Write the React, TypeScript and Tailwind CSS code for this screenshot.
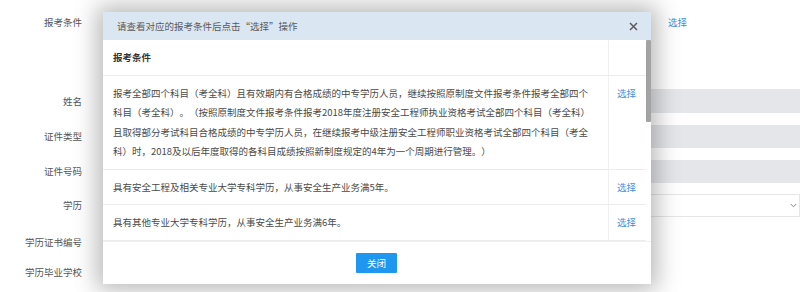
import React from "react";

const font = { fontFamily: '"Noto Sans CJK SC", "Noto Sans", sans-serif' };

export default function App() {
  return (
    <div
      className="relative w-[800px] h-[292px] bg-white overflow-hidden text-[9.5px] text-[#555] [text-spacing-trim:space-all]"
      style={font}
    >
      {/* background form */}
      <div className="flex flex-col">
        <div className="flex h-[44px] items-center">
          <div className="w-[82px] text-right">报考条件</div>
          <div className="flex-1" />
          <div className="w-[132px] text-[#3d8fe0]">选择</div>
        </div>
        <div className="flex h-[24px] items-center mt-[45px]">
          <div className="w-[82px] text-right">姓名</div>
          <div className="ml-[28px] flex-1 h-[24px] bg-[#e4e6e9]" />
        </div>
        <div className="flex h-[23px] items-center mt-[12px]">
          <div className="w-[82px] text-right">证件类型</div>
          <div className="ml-[28px] flex-1 h-[23px] bg-[#e4e6e9]" />
        </div>
        <div className="flex h-[23px] items-center mt-[12px]">
          <div className="w-[82px] text-right">证件号码</div>
          <div className="ml-[28px] flex-1 h-[23px] bg-[#e4e6e9]" />
        </div>
        <div className="flex h-[23px] items-center mt-[11px]">
          <div className="w-[82px] text-right">学历</div>
          <div className="ml-[28px] flex-1 h-[23px] border border-[#e6e6e6] bg-white flex items-center justify-end pr-[2px]">
            <svg width="7" height="5" viewBox="0 0 7 5">
              <path d="M0.8 1 L3.5 3.8 L6.2 1" stroke="#888" strokeWidth="1" fill="none" />
            </svg>
          </div>
        </div>
        <div className="flex h-[24px] items-center mt-[13px]">
          <div className="w-[82px] text-right">学历证书编号</div>
        </div>
        <div className="flex h-[24px] items-center mt-[6px]">
          <div className="w-[82px] text-right">学历毕业学校</div>
        </div>
      </div>

      {/* modal */}
      <div className="absolute left-[103px] top-[12px] w-[548px] h-[272px] bg-white shadow-[0_0_22px_6px_rgba(0,0,0,0.28)] flex flex-col">
        <div className="h-[28px] bg-[#dbe6f3] flex items-center justify-between pl-[14px] pr-[13px] text-[#5a5a5a]">
          <span>请查看对应的报考条件后点击“选择”操作</span>
          <svg width="9" height="9" viewBox="0 0 9 9">
            <path d="M1 1 L8 8 M8 1 L1 8" stroke="#5c5c5c" strokeWidth="1.5" />
          </svg>
        </div>
        <div className="flex h-[201px] overflow-hidden">
          <div className="flex-1 flex flex-col text-[#4a4a4a]">
            <div className="flex h-[36px] border-b border-[#ececec]">
              <div className="w-[505px] pl-[10px] flex items-center font-bold text-[#333]">报考条件</div>
              <div className="flex-1 border-l border-[#f0f0f0]" />
            </div>
            <div className="flex border-b border-[#ececec] h-[94px]">
              <div className="w-[505px] pl-[10px] pt-[8px] leading-[19.3px] whitespace-nowrap">
                <div>报考全部四个科目（考全科）且有效期内有合格成绩的中专学历人员，继续按照原制度文件报考条件报考全部四个</div>
                <div>科目（考全科）。（按照原制度文件报考条件报考2018年度注册安全工程师执业资格考试全部四个科目（考全科）</div>
                <div>且取得部分考试科目合格成绩的中专学历人员，在继续报考中级注册安全工程师职业资格考试全部四个科目（考全</div>
                <div>科）时，2018及以后年度取得的各科目成绩按照新制度规定的4年为一个周期进行管理。）</div>
              </div>
              <div className="flex-1 border-l border-[#f0f0f0] pt-[8px] leading-[19.3px] pl-[8px] text-[#3d8fe0]">选择</div>
            </div>
            <div className="flex border-b border-[#ececec] h-[35px]">
              <div className="w-[505px] pl-[10px] pt-[8px] leading-[19px]">具有安全工程及相关专业大学专科学历，从事安全生产业务满5年。</div>
              <div className="flex-1 border-l border-[#f0f0f0] pt-[8px] leading-[19px] pl-[8px] text-[#3d8fe0]">选择</div>
            </div>
            <div className="flex border-b border-[#ececec] h-[36px]">
              <div className="w-[505px] pl-[10px] pt-[8px] leading-[19px]">具有其他专业大学专科学历，从事安全生产业务满6年。</div>
              <div className="flex-1 border-l border-[#f0f0f0] pt-[8px] leading-[19px] pl-[8px] text-[#3d8fe0]">选择</div>
            </div>
          </div>
          <div className="w-[5px] flex flex-col">
            <div className="h-[82px] bg-[#a3a3a3] rounded-[1px]" />
          </div>
        </div>
        <div className="flex-1 border-t border-[#f0f0f0] flex items-center justify-center">
          <button className="w-[41px] h-[20px] bg-[#1f97f0] text-white text-[9.5px] rounded-[1px] mr-[1px]">
            关闭
          </button>
        </div>
      </div>
    </div>
  );
}
